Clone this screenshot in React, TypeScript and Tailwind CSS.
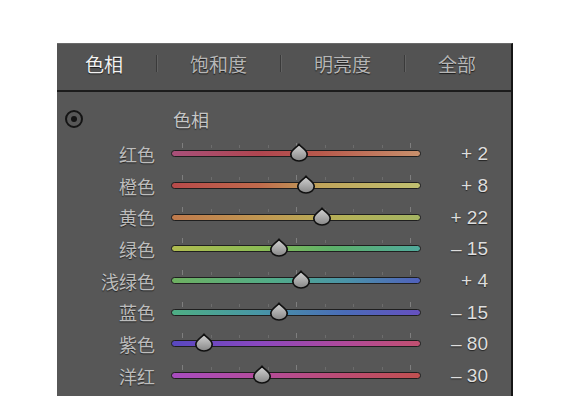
import React from "react";

type Row = { label: string; value: number; text: string; track: string };

const rows: Row[] = [
  { label: "红色", value: 2, text: "+ 2", track: "bg-[linear-gradient(90deg,#a8507a_0%,#b04650_35%,#b85a4c_60%,#c8906c_100%)]" },
  { label: "橙色", value: 8, text: "+ 8", track: "bg-[linear-gradient(90deg,#b84a4a_0%,#c06a4c_35%,#c0a45a_60%,#c0c070_100%)]" },
  { label: "黄色", value: 22, text: "+ 22", track: "bg-[linear-gradient(90deg,#c07a4c_0%,#c09a52_40%,#b4b258_70%,#a4b462_100%)]" },
  { label: "绿色", value: -15, text: "– 15", track: "bg-[linear-gradient(90deg,#b0bc50_0%,#8cbc54_35%,#5cb06a_65%,#50aa9c_100%)]" },
  { label: "浅绿色", value: 4, text: "+ 4", track: "bg-[linear-gradient(90deg,#6eb060_0%,#52ac88_40%,#4a94a8_70%,#5060bc_100%)]" },
  { label: "蓝色", value: -15, text: "– 15", track: "bg-[linear-gradient(90deg,#4eae84_0%,#4896a6_35%,#4a6cb8_70%,#6650c0_100%)]" },
  { label: "紫色", value: -80, text: "– 80", track: "bg-[linear-gradient(90deg,#5848c0_0%,#8a48c0_35%,#b04a9a_70%,#c25070_100%)]" },
  { label: "洋红", value: -30, text: "– 30", track: "bg-[linear-gradient(90deg,#a84cc0_0%,#b44c9c_35%,#bc4c72_70%,#c05050_100%)]" },
];

const tabs = ["色相", "饱和度", "明亮度", "全部"];

const ticks = [0, 1, 2, 3, 4, 5, 6, 7, 8];

function Thumb() {
  return (
    <svg width="20" height="19" viewBox="0 0 20 19">
      <defs>
        <linearGradient id="thumbFill" x1="0" y1="0" x2="0" y2="1">
          <stop offset="0" stopColor="#d4d4d4" />
          <stop offset="0.55" stopColor="#aaaaaa" />
          <stop offset="1" stopColor="#868686" />
        </linearGradient>
      </defs>
      <path
        d="M10 1.2 C12.2 4.6 18.2 6.8 18.2 11.4 A8.2 6.6 0 0 1 1.8 11.4 C1.8 6.8 7.8 4.6 10 1.2 Z"
        fill="url(#thumbFill)"
        stroke="#111"
        strokeWidth="1.7"
        strokeLinejoin="round"
      />
    </svg>
  );
}

function Slider({ value, track }: { value: number; track: string }) {
  const pos = 125.5 + value * 1.16;
  return (
    <div className={`relative w-[250px] h-[7px] rounded-full border border-[#1f1f1f] ${track}`}>
      {ticks.map((i) => (
        <span
          key={i}
          className={
            i === 0 || i === 4 || i === 8
              ? "absolute bottom-[8px] w-px h-[5px] bg-[#7e7e7e]"
              : "absolute bottom-[8px] w-px h-[3px] bg-[#6c6c6c]"
          }
          style={{ left: 10 + i * 28.5 }}
        />
      ))}
      <div className="absolute top-[-8px]" style={{ left: pos - 11 }}>
        <Thumb />
      </div>
    </div>
  );
}

export default function App() {
  return (
    <div className="w-full h-[413px] bg-white pt-[43px] pl-[57px]">
      <div className="w-[456px] h-[353px] bg-[#575757] border-r-2 border-[#151515] border-t border-t-[#6a6a6a] flex flex-col">
        <div className="h-[48px] shrink-0 bg-[#535353] border-b-2 border-[#1c1c1c] flex items-center pb-[7px] pl-[28px] gap-[33px] font-['Noto_Sans_CJK_SC',sans-serif] text-[19px] [text-shadow:0_1px_1px_rgba(0,0,0,0.7)]">
          {tabs.map((t, i) => (
            <React.Fragment key={t}>
              {i > 0 && <span className="w-px h-[17px] bg-[#3a3a3a] shadow-[1px_0_0_#626262]" />}
              <span className={i === 0 ? "text-[#f2f2f2] leading-none" : "text-[#b6b6b6] leading-none"}>{t}</span>
            </React.Fragment>
          ))}
        </div>
        <div className="pt-[11px] flex flex-col">
          <div className="h-[35px] flex items-center pb-[3px]">
            <div className="ml-[8px] w-[18px] h-[18px] rounded-full border-2 border-[#141414] flex items-center justify-center">
              <span className="w-[6px] h-[6px] rounded-full bg-[#141414]" />
            </div>
            <span className="ml-[90px] text-[18px] leading-none text-[#c6c6c6] font-['Noto_Sans_CJK_SC',sans-serif] [text-shadow:0_1px_1px_rgba(0,0,0,0.6)]">
              色相
            </span>
          </div>
          {rows.map((r) => (
            <div key={r.label} className="h-[31.7px] flex items-center">
              <span className="w-[98px] text-right text-[18px] leading-none text-[#bdbdbd] font-['Noto_Sans_CJK_SC',sans-serif] [text-shadow:0_1px_1px_rgba(0,0,0,0.6)]">
                {r.label}
              </span>
              <div className="ml-[16px]">
                <Slider value={r.value} track={r.track} />
              </div>
              <span className="w-[67px] text-right text-[19px] leading-none text-[#dedede] font-['Liberation_Sans',sans-serif] [text-shadow:0_1px_1px_rgba(0,0,0,0.6)] whitespace-pre">
                {r.text}
              </span>
            </div>
          ))}
        </div>
      </div>
    </div>
  );
}
